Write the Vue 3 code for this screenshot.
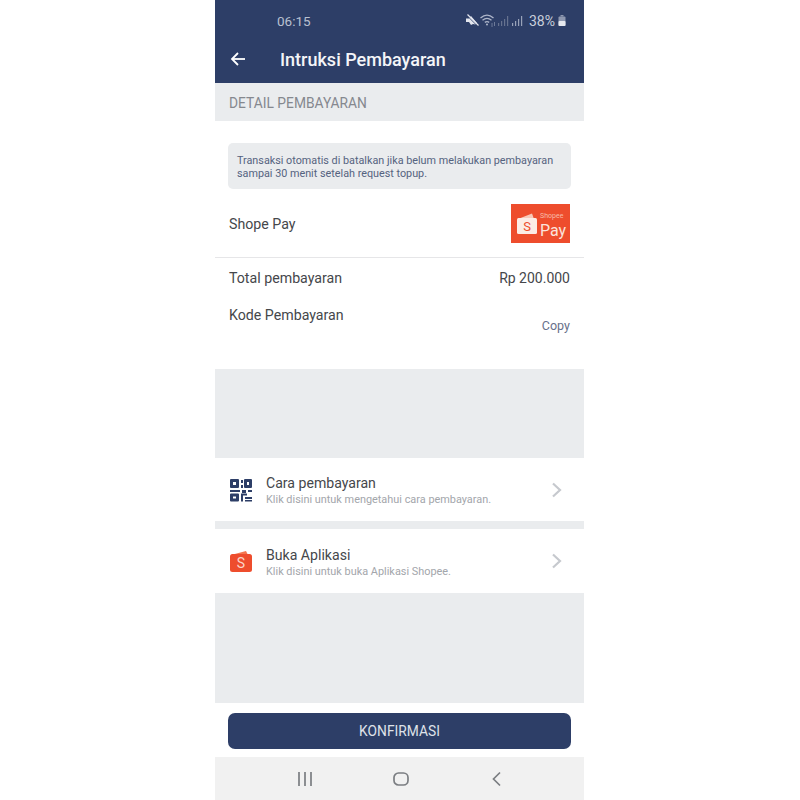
<template>
  <div class="page">
    <div class="phone">
      <header class="header">
        <div class="status">
          <span class="time">06:15</span>
          <div class="status-right">
            <svg width="14" height="13" viewBox="0 0 14 13">
              <path d="M1 4.500h3l2-2.500 6 7-1.500 1.500-2.500-.5-2 1-2-3H1z" fill="#e3e6ee" />
              <path d="M1.500 1l11 11" stroke="#2d3e67" stroke-width="1" />
              <path d="M2.500 .5l11 11" stroke="#e3e6ee" stroke-width="1.200" />
            </svg>
            <svg width="16" height="13" viewBox="0 0 16 13" fill="none" stroke="#aeb6ca" stroke-width="1.300">
              <path d="M.500 4C4.500.5 9.500.5 13.500 4" />
              <path d="M2.500 6.200c2.800-2.300 6.200-2.300 9 0" />
              <path d="M4.800 8.400c1.500-1 2.900-1 4.400 0" />
              <circle cx="7" cy="10.500" r="1" fill="#aeb6ca" stroke="none" />
              <path d="M12 9.500v3M14.500 8.500v4" stroke-width="1" stroke-dasharray="1 1" />
            </svg>
            <svg width="14" height="11" viewBox="0 0 14 11">
              <rect x="1" y="8" width="1.200" height="3" fill="#66728f" />
              <rect x="4" y="6" width="1.200" height="5" fill="#66728f" />
              <rect x="7" y="4" width="1.200" height="7" fill="#66728f" />
              <rect x="10" y="1" width="1.200" height="10" fill="#66728f" />
            </svg>
            <svg width="13" height="11" viewBox="0 0 13 11">
              <rect x="0" y="8" width="1.200" height="3" fill="#98a2b8" />
              <rect x="3" y="6" width="1.200" height="5" fill="#98a2b8" />
              <rect x="6" y="4" width="1.200" height="7" fill="#98a2b8" />
              <rect x="9" y="1" width="1.200" height="10" fill="#98a2b8" />
            </svg>
            <span class="pct">38%</span>
            <svg width="8" height="11" viewBox="0 0 8 11">
              <rect x="2.500" y="0" width="3" height="1.500" fill="#8e98b0" />
              <rect x="0.500" y="1.500" width="7" height="9.500" rx="1" fill="#8e98b0" />
              <rect x="0.500" y="6" width="7" height="5" rx="1" fill="#e6e9ef" />
            </svg>
          </div>
        </div>
        <div class="titlebar">
          <svg class="back" width="16" height="14" viewBox="0 0 16 14" fill="none" stroke="#fff" stroke-width="1.800">
            <path d="M15 7H2" />
            <path d="M8 1L2 7l6 6" />
          </svg>
          <h1 class="title">Intruksi Pembayaran</h1>
        </div>
      </header>

      <div class="section-label">DETAIL PEMBAYARAN</div>

      <section class="detail">
        <div class="notice">
          Transaksi otomatis di batalkan jika belum melakukan pembayaran<br />sampai 30 menit setelah request topup.
        </div>
        <div class="method">
          <span class="label">Shope Pay</span>
          <div class="spay">
            <svg width="22" height="23" viewBox="0 0 22 23">
              <path d="M2 7L16 1.500 18 7z" fill="#f8c9b9" />
              <rect x="1" y="6" width="20" height="16" rx="1.500" fill="#fcece6" />
              <text x="11" y="19" text-anchor="middle" class="spay-s">S</text>
            </svg>
            <div class="spay-text">
              <span class="spay-small">Shopee</span>
              <span class="spay-big">Pay</span>
            </div>
          </div>
        </div>
        <div class="row total">
          <span class="label">Total pembayaran</span>
          <span class="label amount">Rp 200.000</span>
        </div>
        <div class="row code">
          <span class="label">Kode Pembayaran</span>
          <span class="copy">Copy</span>
        </div>
      </section>

      <div class="gap-one"></div>

      <section class="action">
        <svg class="action-icon" width="24" height="24" viewBox="0 0 24 24" fill="#2d3e67">
          <path fill-rule="evenodd" d="M2 1h7a1 1 0 0 1 1 1v7a1 1 0 0 1-1 1H2a1 1 0 0 1-1-1V2a1 1 0 0 1 1-1zM4 4v3h3V4z" />
          <path fill-rule="evenodd" d="M16 1h6a1 1 0 0 1 1 1v7a1 1 0 0 1-1 1h-6a1 1 0 0 1-1-1V2a1 1 0 0 1 1-1zM18 4v3h2V4z" />
          <path d="M12 2h2v3h-2zM12 7h2v3h-2zM1 12h10v2H1zM13 12h4v3h-4zM19 12h4v2h-4z" />
          <path fill-rule="evenodd" d="M2 15.500h7a1 1 0 0 1 1 1v6a1 1 0 0 1-1 1H2a1 1 0 0 1-1-1v-6a1 1 0 0 1 1-1zM4 18.500v2h3v-2z" />
          <path d="M12 15.500h2v8h-2zM12 15.500h6v2h-6zM16 19h7v2h-7zM16 22h7v1.500h-7z" />
        </svg>
        <div class="action-text">
          <div class="action-title">Cara pembayaran</div>
          <div class="action-sub">Klik disini untuk mengetahui cara pembayaran.</div>
        </div>
        <svg class="chev" width="11" height="16" viewBox="0 0 11 16" fill="none" stroke="#c6c9ce" stroke-width="2.200">
          <path d="M2 1.500L9 8l-7 6.500" />
        </svg>
      </section>

      <div class="gap-two"></div>

      <section class="action action-tall">
        <svg class="action-icon" width="24" height="24" viewBox="0 0 24 24">
          <path d="M2 6l15-4 2 4z" fill="#f4764f" />
          <rect x="1" y="5" width="22" height="18" rx="2.500" fill="#ee4d2d" />
          <text x="12" y="19" text-anchor="middle" class="app-s">S</text>
        </svg>
        <div class="action-text">
          <div class="action-title">Buka Aplikasi</div>
          <div class="action-sub">Klik disini untuk buka Aplikasi Shopee.</div>
        </div>
        <svg class="chev" width="11" height="16" viewBox="0 0 11 16" fill="none" stroke="#c6c9ce" stroke-width="2.200">
          <path d="M2 1.500L9 8l-7 6.500" />
        </svg>
      </section>

      <div class="gap-three"></div>

      <div class="footer">
        <button class="confirm">KONFIRMASI</button>
      </div>

      <nav class="navbar">
        <svg width="16" height="14" viewBox="0 0 16 14" stroke="#7b7e82" stroke-width="1.700">
          <path d="M2 0v14M8 0v14M14 0v14" />
        </svg>
        <svg width="16" height="14" viewBox="0 0 16 14" fill="none" stroke="#7b7e82" stroke-width="1.700">
          <rect x="1" y="1" width="14" height="12" rx="4.500" />
        </svg>
        <svg width="16" height="16" viewBox="0 0 16 16" fill="none" stroke="#7b7e82" stroke-width="1.700">
          <path d="M12 1.500L5.500 8l6.500 6.500" />
        </svg>
      </nav>
    </div>
  </div>
</template>

<script setup>
</script>

<style>
html,
body {
  background: #fff;
}
</style>

<style scoped>
.page {
  width: 800px;
  height: 800px;
  padding-left: 215px;
  box-sizing: border-box;
  background: #fff;
  font-family: Roboto, "Noto Sans", sans-serif;
}

.phone {
  width: 369px;
  height: 800px;
  display: flex;
  flex-direction: column;
  background: #fff;
}

.header {
  height: 83px;
  background: #2d3e67;
  flex: none;
}

.status {
  height: 41px;
  padding: 0 18px 0 62px;
  display: flex;
  align-items: center;
  justify-content: space-between;
}

.time {
  font-size: 13.500px;
  color: #b9c0d0;
}

.status-right {
  display: flex;
  align-items: center;
  gap: 1px;
}

.pct {
  font-size: 14px;
  color: #c9cedb;
  margin: 0 2px 0 3px;
}

.titlebar {
  height: 36px;
  display: flex;
  align-items: center;
  padding-left: 15px;
}

.back {
  flex: none;
}

.title {
  margin: 0 0 0 34px;
  font-size: 18px;
  font-weight: 500;
  color: #f4f5f8;
}

.section-label {
  height: 38px;
  flex: none;
  display: flex;
  align-items: center;
  padding: 1px 0 0 14px;
  box-sizing: border-box;
  background: #eaecee;
  color: #85888e;
  font-size: 13.800px;
}

.detail {
  height: 248px;
  flex: none;
  padding-top: 22px;
  box-sizing: border-box;
}

.notice {
  margin: 0 13px;
  height: 46px;
  box-sizing: border-box;
  padding: 11px 0 0 9px;
  background: #eaecee;
  border-radius: 5px;
  font-size: 10.800px;
  line-height: 13px;
  color: #55637f;
  white-space: nowrap;
}

.method {
  margin-top: 15px;
  padding: 0 14px;
  display: flex;
  align-items: flex-start;
  justify-content: space-between;
  border-bottom: 1px solid #e6e6e8;
  box-sizing: border-box;
  height: 54px;
}

.method .label {
  margin-top: 12px;
}

.spay {
  width: 59px;
  height: 39px;
  background: #ee4d2d;
  display: flex;
  align-items: center;
  padding-left: 5px;
  box-sizing: border-box;
  gap: 2px;
}

.spay-s {
  font-size: 13px;
  fill: #ee4d2d;
  font-family: Roboto, sans-serif;
}

.spay-text {
  display: flex;
  flex-direction: column;
  color: #fbe3dc;
  margin-top: 4px;
}

.spay-small {
  font-size: 7px;
  line-height: 9px;
  color: #f8bba8;
}

.spay-big {
  font-size: 16px;
  line-height: 19px;
}

.label {
  font-size: 14.200px;
  color: #45474b;
}

.amount {
  font-size: 14px;
}

.row {
  display: flex;
  justify-content: space-between;
  padding: 0 14px;
}

.total {
  margin-top: 12px;
}

.code {
  margin-top: 21px;
  align-items: flex-start;
}

.copy {
  font-size: 12.500px;
  color: #67708a;
  margin-top: 11px;
}

.gap-one {
  height: 89px;
  flex: none;
  background: #eaecee;
}

.gap-two {
  height: 8px;
  flex: none;
  background: #eaecee;
}

.gap-three {
  height: 110px;
  flex: none;
  background: #eaecee;
}

.action {
  height: 63px;
  flex: none;
  display: flex;
  align-items: center;
  padding: 0 22px 0 14px;
  box-sizing: border-box;
}

.action-tall {
  height: 64px;
}

.action-tall .action-text {
  padding-top: 3px;
}

.action-icon {
  flex: none;
}

.action-text {
  flex: 1;
  margin-left: 13px;
  padding-top: 1px;
}

.action-title {
  font-size: 14.100px;
  line-height: 18px;
  color: #45474b;
}

.action-sub {
  font-size: 10.900px;
  line-height: 15px;
  color: #a3a6ab;
}

.app-s {
  font-size: 14px;
  fill: #fbd5c8;
  font-family: Roboto, sans-serif;
}

.footer {
  height: 54px;
  flex: none;
  padding: 10px 13px 8px;
  box-sizing: border-box;
}

.confirm {
  width: 100%;
  height: 36px;
  border: none;
  border-radius: 7px;
  background: #2d3e67;
  color: #dfe2e9;
  font-family: inherit;
  font-size: 13.800px;
}

.navbar {
  flex: 1;
  background: #f1f1f1;
  display: flex;
  align-items: center;
  justify-content: space-between;
  padding: 0 80px 0 82px;
}
</style>
